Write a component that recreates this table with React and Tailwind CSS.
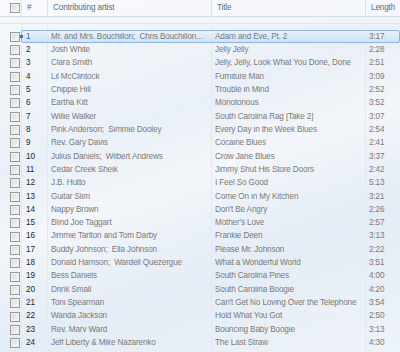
import React from "react";

const rows = [
  ["Mr. and Mrs. Bouchillon;  Chris Bouchillon...", "Adam and Eve, Pt. 2", "3:17"],
  ["Josh White", "Jelly Jelly", "2:28"],
  ["Clara Smith", "Jelly, Jelly, Look What You Done, Done", "2:51"],
  ["Lil McClintock", "Furniture Man", "3:09"],
  ["Chippie Hill", "Trouble in Mind", "2:52"],
  ["Eartha Kitt", "Monotonous", "3:52"],
  ["Willie Walker", "South Carolina Rag [Take 2]", "3:07"],
  ["Pink Anderson;  Simmie Dooley", "Every Day in the Week Blues", "2:54"],
  ["Rev. Gary Davis", "Cocaine Blues", "2:41"],
  ["Julius Daniels;  Wilbert Andrews", "Crow Jane Blues", "3:37"],
  ["Cedar Creek Sheik", "Jimmy Shut His Store Doors", "2:42"],
  ["J.B. Hutto", "I Feel So Good", "5:13"],
  ["Guitar Slim", "Come On in My Kitchen", "3:21"],
  ["Nappy Brown", "Don't Be Angry", "2:26"],
  ["Blind Joe Taggart", "Mother's Love", "2:57"],
  ["Jimmie Tarlton and Tom Darby", "Frankie Deen", "3:13"],
  ["Buddy Johnson;  Ella Johnson", "Please Mr. Johnson", "2:22"],
  ["Donald Harrison;  Wardell Quezergue", "What a Wonderful World", "3:51"],
  ["Bess Daniels", "South Carolina Pines", "4:00"],
  ["Drink Small", "South Carolina Boogie", "4:20"],
  ["Toni Spearman", "Can't Get No Loving Over the Telephone", "3:54"],
  ["Wanda Jackson", "Hold What You Got", "2:50"],
  ["Rev. Marv Ward", "Bouncing Baby Boogie", "3:13"],
  ["Jeff Liberty & Mike Nazarenko", "The Last Straw", "4:30"],
];

function Box() {
  return (
    <div className="w-[10px] h-[10px] border border-[#9a9a9a] bg-gradient-to-br from-[#d8d8d8] to-[#fafafa] shadow-[inset_0_0_0_1px_#f0f0f0]" />
  );
}

export default function App() {
  return (
    <div
      className="relative w-[400px] h-[352px] overflow-hidden text-[8.2px] tracking-[-0.15px] leading-none"
      style={{
        fontFamily: '"Liberation Sans", Arial, sans-serif',
        background:
          "linear-gradient(160deg, #f6f9fc 0%, #eaf0f7 35%, #f3f6fa 50%, #e4ecf5 70%, #eef3f8 100%)",
      }}
    >
      {/* vertical grid lines */}
      <div className="absolute top-0 bottom-0 left-[21px] w-px bg-[#e3e9f0]" />
      <div className="absolute top-0 bottom-0 left-[47px] w-px bg-[#e3e9f0]" />
      <div className="absolute top-0 bottom-0 left-[211px] w-px bg-[#e3e9f0]" />
      <div className="absolute top-0 bottom-0 left-[365px] w-px bg-[#e3e9f0]" />

      {/* header */}
      <div className="relative flex h-[17px] items-center border-b border-[#d5dde7] bg-[#f7f9fc]/80 text-[#5f6b7a]">
        <div className="w-[21px] flex justify-end pr-[1px]">
          <Box />
        </div>
        <div className="w-[26px] pl-[5px] border-l border-[#dbe2ea] h-full flex items-center">#</div>
        <div className="w-[164px] pl-[5px] border-l border-[#dbe2ea] h-full flex items-center">Contributing artist</div>
        <div className="w-[154px] pl-[5px] border-l border-[#dbe2ea] h-full flex items-center">Title</div>
        <div className="flex-1 pl-[5px] border-l border-[#dbe2ea] h-full flex items-center">Length</div>
      </div>
      {/* group row */}
      <div className="relative h-[7px] border-b border-[#dde4ed] bg-[#f3f6fa]/70" />
      <div className="h-[6px]" />

      {/* rows */}
      <div className="relative flex flex-col">
        {rows.map((r, i) => {
          const sel = i === 0;
          return (
            <div key={i} className="flex h-[13.33px] items-center">
              <div className="w-[21px] flex justify-end pr-[1px]">
                <Box />
              </div>
              <div
                className={
                  sel
                    ? "relative flex flex-1 h-full items-center rounded-[2px] border border-[#8fb4df] bg-gradient-to-b from-[#e8f2fd] to-[#cfe2f9]"
                    : "flex flex-1 h-full items-center border border-transparent"
                }
              >
                {sel && <div className="absolute left-[-2px] top-[4px] w-[3px] h-[3px] bg-[#2f6fc7]" />}
                <div className={"w-[25px] pl-[4px] " + (sel ? "text-[#3a6db5]" : "text-[#262626]")}>{i + 1}</div>
                <div className="w-[164px] pl-[4px] pr-[3px] text-[#7a7a7a] whitespace-pre overflow-hidden text-ellipsis">
                  {r[0]}
                </div>
                <div className="w-[154px] pl-[4px] pr-[3px] text-[#7a7a7a] whitespace-pre overflow-hidden text-ellipsis">
                  {r[1]}
                </div>
                <div className="flex-1 pl-[4px] text-[#7a7a7a]">{r[2]}</div>
              </div>
            </div>
          );
        })}
      </div>
    </div>
  );
}
